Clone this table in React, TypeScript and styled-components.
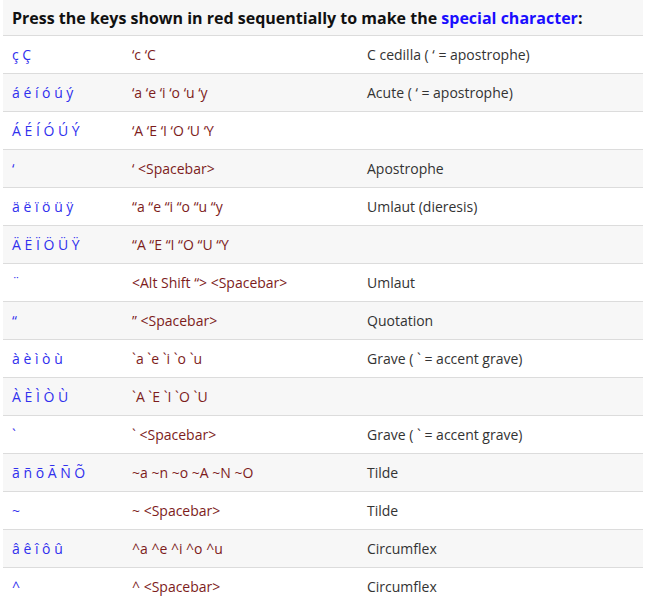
import styled, { createGlobalStyle } from "styled-components";

const GlobalStyle = createGlobalStyle`
  html, body {
    margin: 0;
    padding: 0;
    background: #fff;
  }
  body {
    font-family: "Open Sans", "Liberation Sans", sans-serif;
  }
`;

const Wrap = styled.div`
  padding: 0 2px 0 3px;
`;

const Table = styled.table`
  width: 100%;
  border-collapse: collapse;
  font-size: 14px;
  color: #333;
`;

const HeadCell = styled.th`
  background: #f7f7f7;
  text-align: left;
  font-size: 16px;
  font-weight: 700;
  color: #111;
  height: 35px;
  padding: 0 9px;
  border-bottom: 1px solid #dcdcdc;
`;

const Link = styled.span`
  color: #1a0dff;
`;

const Row = styled.tr<{ $shade: boolean }>`
  background: ${(p) => (p.$shade ? "#f7f7f7" : "#fff")};
  border-bottom: 1px solid #dcdcdc;
`;

const Cell = styled.td<{ $kind: "char" | "keys" | "desc"; $w: number }>`
  height: 37px;
  padding: 0 9px;
  width: ${(p) => p.$w}px;
  color: ${(p) =>
    p.$kind === "char" ? "#3030ee" : p.$kind === "keys" ? "#7d1c1c" : "#333"};
  white-space: nowrap;
`;

const rows: [string, string, string][] = [
  ["ç Ç", "‘c ‘C", "C cedilla ( ‘ = apostrophe)"],
  ["á é í ó ú ý", "‘a ‘e ‘i ‘o ‘u ‘y", "Acute ( ‘ = apostrophe)"],
  ["Á É Í Ó Ú Ý", "‘A ‘E ‘I ‘O ‘U ‘Y", ""],
  ["‘", "‘ <Spacebar>", "Apostrophe"],
  ["ä ë ï ö ü ÿ", "“a “e “i “o “u “y", "Umlaut (dieresis)"],
  ["Ä Ë Ï Ö Ü Ÿ", "“A “E “I “O “U “Y", ""],
  ["¨", "<Alt Shift “> <Spacebar>", "Umlaut"],
  ["“", "” <Spacebar>", "Quotation"],
  ["à è ì ò ù", "`a `e `i `o `u", "Grave ( ` = accent grave)"],
  ["À È Ì Ò Ù", "`A `E `I `O `U", ""],
  ["`", "` <Spacebar>", "Grave ( ` = accent grave)"],
  ["ã ñ õ Ã Ñ Õ", "~a ~n ~o ~A ~N ~O", "Tilde"],
  ["~", "~ <Spacebar>", "Tilde"],
  ["â ê î ô û", "^a ^e ^i ^o ^u", "Circumflex"],
  ["^", "^ <Spacebar>", "Circumflex"],
];

export default function App() {
  return (
    <Wrap>
      <GlobalStyle />
      <Table>
        <thead>
          <tr>
            <HeadCell colSpan={3}>
              Press the keys shown in red sequentially to make the{" "}
              <Link>special character</Link>:
            </HeadCell>
          </tr>
        </thead>
        <tbody>
          {rows.map((r, i) => (
            <Row key={i} $shade={i % 2 === 1}>
              <Cell $kind="char" $w={102}>{r[0]}</Cell>
              <Cell $kind="keys" $w={217}>{r[1]}</Cell>
              <Cell $kind="desc" $w={267}>{r[2]}</Cell>
            </Row>
          ))}
        </tbody>
      </Table>
    </Wrap>
  );
}
